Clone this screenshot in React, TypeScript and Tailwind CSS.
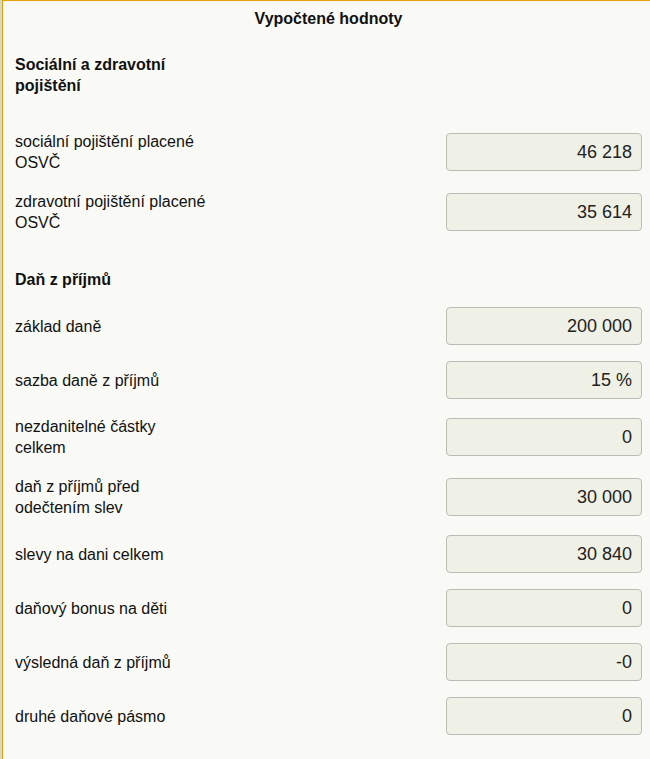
const rows1 = [
  { label: "sociální pojištění placené OSVČ", value: "46 218" },
  { label: "zdravotní pojištění placené OSVČ", value: "35 614" },
];

const rows2 = [
  { label: "základ daně", value: "200 000" },
  { label: "sazba daně z příjmů", value: "15 %" },
  { label: "nezdanitelné částky celkem", value: "0" },
  { label: "daň z příjmů před odečtením slev", value: "30 000" },
  { label: "slevy na dani celkem", value: "30 840" },
  { label: "daňový bonus na děti", value: "0" },
  { label: "výsledná daň z příjmů", value: "-0" },
  { label: "druhé daňové pásmo", value: "0" },
];

const Row = ({ label, value }: { label: string; value: string }) => (
  <div className="flex items-center justify-between">
    <label className="w-[195px] py-px text-[16px] leading-[21px] text-[#111]">{label}</label>
    <input
      readOnly
      value={value}
      className="h-[38px] w-[196px] rounded-[4px] border border-[#bcbcb4] bg-[#f0f1e6] pr-[9px] text-right text-[18px] text-[#222] outline-none"
    />
  </div>
);

export default function App() {
  return (
    <div
      className="min-h-screen border-l-2 border-[#d6d6d2] bg-[#f9faf6]"
      style={{ fontFamily: '"Liberation Sans", Arial, sans-serif' }}
    >
      <div className="min-h-screen border-l border-t border-[#e0a200] pb-6 pl-3 pr-2">
        <h1 className="pt-2 text-center text-[16px] font-bold leading-5 text-[#111]">
          Vypočtené hodnoty
        </h1>

        <h2 className="mt-[25px] w-[195px] text-[16px] font-bold leading-[21px] text-[#111]">
          Sociální a zdravotní pojištění
        </h2>
        <div className="mt-[34px] flex flex-col gap-4">
          {rows1.map((r) => (
            <Row key={r.label} {...r} />
          ))}
        </div>

        <h2 className="mt-[35px] w-[195px] text-[16px] font-bold leading-[21px] text-[#111]">
          Daň z příjmů
        </h2>
        <div className="mt-[17px] flex flex-col gap-4">
          {rows2.map((r) => (
            <Row key={r.label} {...r} />
          ))}
        </div>
      </div>
    </div>
  );
}
